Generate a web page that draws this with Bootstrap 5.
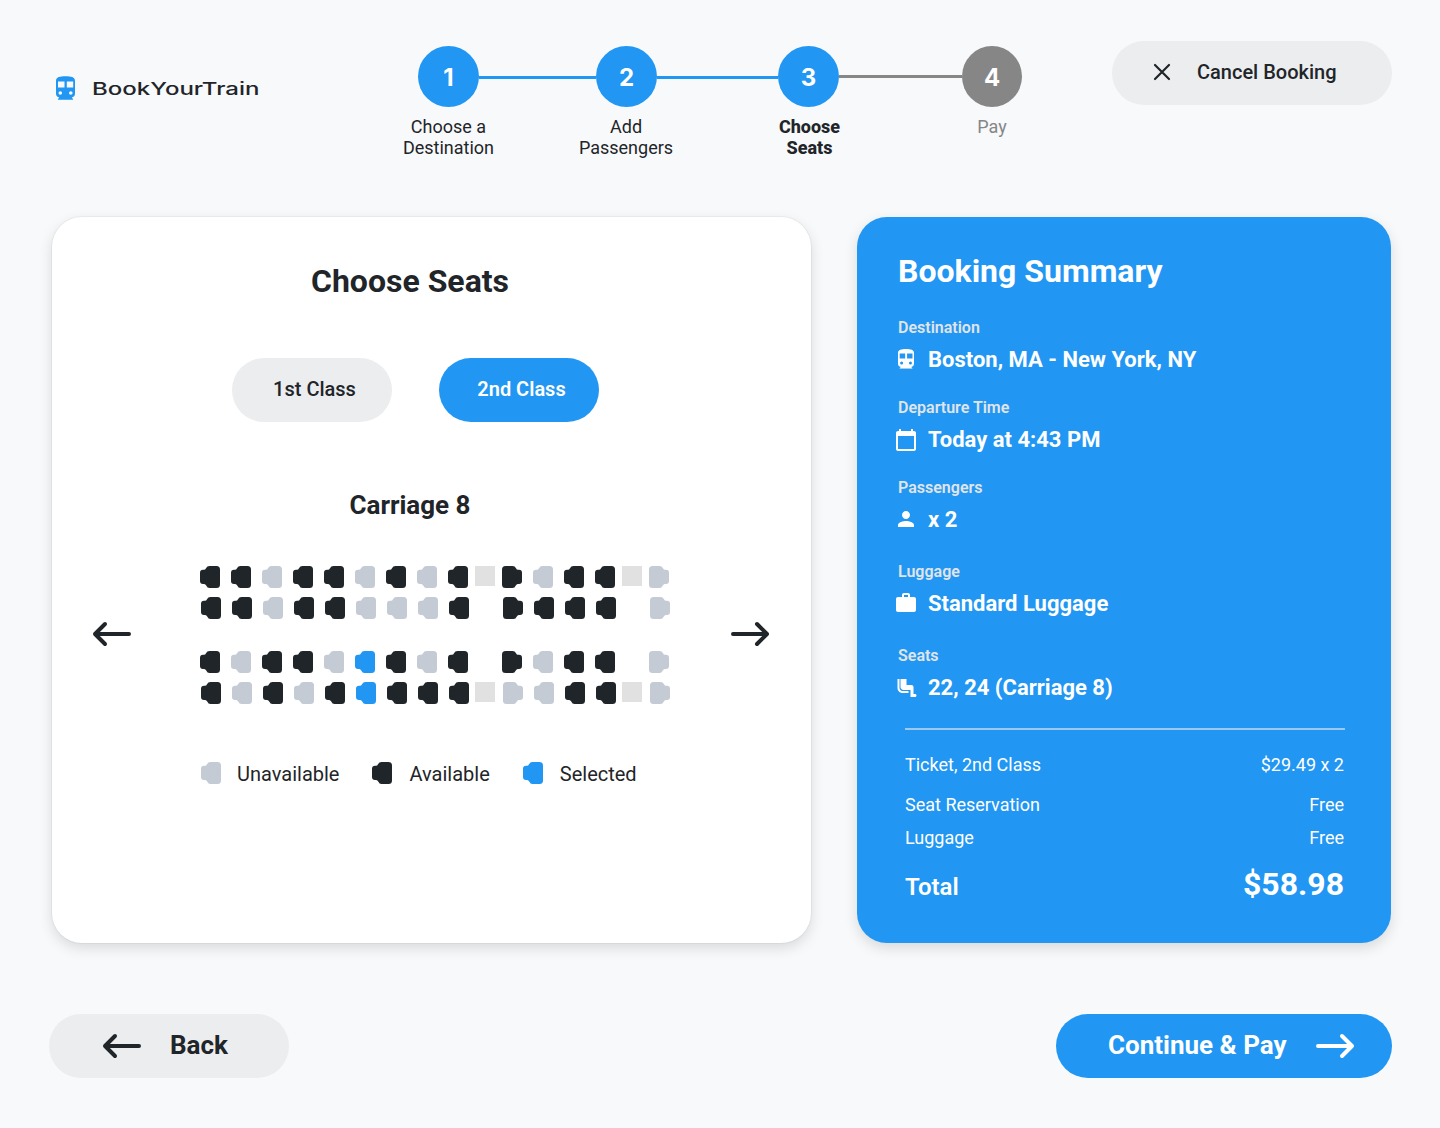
<!DOCTYPE html>
<html lang="en">
<head>
<meta charset="utf-8">
<meta name="viewport" content="width=device-width, initial-scale=1">
<title>BookYourTrain – Choose Seats</title>
<link href="https://cdn.jsdelivr.net/npm/bootstrap@5.3.0/dist/css/bootstrap.min.css" rel="stylesheet">
<style>
  :root { --blue: #2196f3; --ink: #1f2529; --soft: #ecedee; --seat-off: #c4cbd5; }
  body { background: #f7f9fb; color: var(--ink); font-family: Roboto, "Liberation Sans", sans-serif; }
  svg { display: block; flex: none; }
  .page { width: 1440px; height: 1128px; padding: 41px 48px 50px 49px; }
  .topbar { height: 176px; }
  .brand { margin: 35px 0 0 7px; width: 362px; }
  .brand-name { font: 500 17px Inter, sans-serif; }
  .steps { margin-top: 5px; }
  .step { width: 61px; }
  .bubble { width: 61px; height: 61px; background: var(--blue); color: #fff; font: 700 24px/63px Inter, sans-serif; text-align: center; }
  .step-label { font-size: 18px; line-height: 21px; margin-top: 9px; text-align: center; white-space: nowrap; }
  .step-label.second { padding-right: 1px; }
  .step-label.current { font-weight: 800; padding-left: 2px; }
  .rail { height: 3px; margin-top: 30px; background: var(--blue); }
  .rail-a { width: 117px; } .rail-b { width: 121px; } .rail-c { width: 123px; background: #868686; margin-top: 29px; }
  .todo, .todo .bubble { width: 60px; }
  .todo .bubble { background: #868686; } .todo .step-label { color: #868686; }
  .pill { border: 0; border-radius: 32px; height: 64px; background: var(--soft); color: var(--ink); padding: 0; white-space: nowrap; }
  .pill-blue { background: var(--blue); color: #fff; }
  .cancel { width: 280px; font-size: 20px; font-weight: 500; gap: 26px; padding: 0 0 2px 41px; }
  .panel { border-radius: 30px; height: 726px; box-shadow: 0 5px 14px rgba(0,0,0,.13); }
  .panel-seats { width: 759px; margin-left: 3px; background: #fff; padding: 43px 41px 0 40px; box-shadow: 0 5px 14px rgba(0,0,0,.13), 0 0 0 1px rgba(0,0,0,.04); }
  .panel-sum { width: 534px; margin-right: 1px; background: var(--blue); color: #fff; padding: 33px 47px 0 38px; }
  .h-main { font-size: 32px; line-height: 42px; font-weight: 700; }
  .h-sum { padding-left: 3px; }
  .off-centre { padding-right: 42px; text-align: center; }
  .classes { gap: 47px; margin: 56px 0 0 140px; }
  .classes .pill { width: 160px; font-size: 20px; font-weight: 500; line-height: 62px; padding: 0 0 2px 5px; }
  .classes .pill-blue { font-weight: 600; }
  .carriage { font-size: 26px; font-weight: 700; line-height: 34px; margin-top: 66px; }
  .deck { margin-top: 44px; height: 138px; }
  .seat-map { margin-left: 7px; }
  .seat-row { height: 22px; }
  .gap-row { margin-top: 9px; }
  .aisle { margin-top: 32px; }
  .seat { width: 20px; height: 22px; fill: var(--ink); margin-right: 11px; }
  .seat.u { fill: var(--seat-off); } .seat.s { fill: var(--blue); }
  .seat.flip { transform: scaleX(-1); }
  .seat.tight { margin-right: 7px; }
  .table-block { width: 20px; height: 20px; margin-right: 7px; }
  .table-block.on { background: #e1e1e2; }
  .shift .seat { transform: translateX(1px); }
  .shift .seat.flip { transform: translateX(1px) scaleX(-1); }
  .legend { margin: 57px 0 0 109px; font-size: 20px; line-height: 26px; }
  .legend .seat { margin: 0 0 2px; }
  .lg-a { margin: 0 33px 0 16px; } .lg-b { margin: 0 33px 0 17px; } .lg-c { margin-left: 17px; }
  .entries { padding-top: 26px; }
  .entry { height: 80px; }
  .entry-tall { height: 84px; }
  .sum-label { font-size: 16px; font-weight: 600; line-height: 20px; color: #e0e5ea; padding-left: 3px; }
  .sum-value { font-size: 22px; font-weight: 700; line-height: 28px; margin-top: 8px; gap: 10px; }
  .entry svg { width: 24px; height: 24px; fill: #fff; margin-left: -1px; }
  .rule { height: 2px; background: #9bc9ee; margin: -2px -1px 0 10px; }
  .costs { padding-left: 10px; font-size: 18px; line-height: 22px; }
  .cost-a { margin-top: 24px; } .cost-b { margin-top: 18px; } .cost-c { margin-top: 11px; }
  .total { margin-top: 14px; line-height: 42px; font-weight: 700; }
  .total-name { font-size: 24px; font-weight: 600; } .total-sum { font-size: 32px; }
  .back { width: 240px; font-size: 26px; font-weight: 700; gap: 28px; padding: 0 0 0 53px; }
  .next { width: 336px; font-size: 26px; font-weight: 700; gap: 28px; padding: 0 0 0 52px; }
  .back span, .next span { padding-bottom: 2px; }
  .arrow { width: 40px; height: 26px; fill: none; stroke: currentColor; stroke-width: 4; stroke-linecap: round; stroke-linejoin: round; }
  .deck .arrow { margin-bottom: 2px; }
</style>
<script src="https://cdn.jsdelivr.net/npm/bootstrap@5.3.0/dist/js/bootstrap.bundle.min.js"></script>
</head>
<body>
<svg width="0" height="0" class="position-absolute" aria-hidden="true">
  <symbol id="seat" viewBox="0 0 20 22"><path d="M9.500 0H16.500Q20 0 20 3.500V18.500Q20 22 16.500 22H9.500Q7.300 22 6.200 19.500Q5.500 17.900 4.200 17.900H3Q0 17.900 0 15V6.800Q0 3.800 3 3.800H4Q5.300 3.700 6 2.200Q7 0 9.500 0Z"/></symbol>
  <symbol id="train" viewBox="0 0 19 23.400"><path fill-rule="evenodd" d="M9.500 0C4 0 0 .8 0 4.500V17.500C0 19.500 1.400 21 3.300 21.300L2 22.600V23.400H17V22.600L15.700 21.300C17.600 21 19 19.500 19 17.500V4.500C19 .8 15 0 9.500 0ZM2 5.300H8.500V11.300H2ZM10.800 5.300H17.200V11.300H10.800ZM4.300 14.900a1.800 1.800 0 1 1 0 3.600a1.800 1.800 0 1 1 0-3.600ZM14.800 14.900a1.800 1.800 0 1 1 0 3.600a1.800 1.800 0 1 1 0-3.600Z"/></symbol>
  <symbol id="left" viewBox="0 0 40 26"><path d="M37 13H3M13 3L3 13L13 23"/></symbol>
  <symbol id="right" viewBox="0 0 40 26"><path d="M3 13H37M27 3L37 13L27 23"/></symbol>
</svg>

<div class="page d-flex flex-column">
  <header class="topbar d-flex align-items-start">
    <div class="brand d-flex">
      <svg width="19" height="24" fill="#2196f3"><use href="#train"/></svg>
      <svg width="188" height="28"><text class="brand-name" x="17" y="18.500" textLength="167.500" lengthAdjust="spacingAndGlyphs" fill="#1f2529">BookYourTrain</text></svg>
    </div>
    <div class="steps d-flex align-items-start">
      <div class="step d-flex flex-column align-items-center"><div class="bubble rounded-circle">1</div><div class="step-label">Choose a<br>Destination</div></div>
      <div class="rail rail-a"></div>
      <div class="step d-flex flex-column align-items-center"><div class="bubble rounded-circle">2</div><div class="step-label second">Add<br>Passengers</div></div>
      <div class="rail rail-b"></div>
      <div class="step d-flex flex-column align-items-center"><div class="bubble rounded-circle">3</div><div class="step-label current">Choose<br>Seats</div></div>
      <div class="rail rail-c"></div>
      <div class="step todo d-flex flex-column align-items-center"><div class="bubble rounded-circle">4</div><div class="step-label">Pay</div></div>
    </div>
    <button class="btn pill cancel d-flex align-items-center ms-auto">
      <svg width="18" height="18" viewBox="0 0 18 18" fill="none" stroke="currentColor" stroke-width="2.200" stroke-linecap="round"><path d="M2 2L16 16M16 2L2 16"/></svg>
      Cancel Booking
    </button>
  </header>

  <main class="d-flex justify-content-between">
    <section class="panel panel-seats">
      <h1 class="h-main off-centre mb-0">Choose Seats</h1>
      <div class="classes d-flex">
        <button class="btn pill">1st Class</button>
        <button class="btn pill pill-blue">2nd Class</button>
      </div>
      <h2 class="carriage off-centre mb-0">Carriage 8</h2>
      <div class="deck d-flex align-items-center justify-content-between">
        <svg class="arrow"><use href="#left"/></svg>
        <div id="seats" class="seat-map"></div>
        <svg class="arrow"><use href="#right"/></svg>
      </div>
      <div class="legend d-flex align-items-center">
        <svg class="seat u"><use href="#seat"/></svg><span class="lg-a">Unavailable</span>
        <svg class="seat"><use href="#seat"/></svg><span class="lg-b">Available</span>
        <svg class="seat s"><use href="#seat"/></svg><span class="lg-c">Selected</span>
      </div>
    </section>

    <section class="panel panel-sum">
      <h2 class="h-main h-sum mb-0">Booking Summary</h2>
      <div class="entries">
        <div class="entry"><div class="sum-label">Destination</div><div class="sum-value d-flex align-items-center"><svg viewBox="0 0 24 24"><use href="#train" x="4" y="1" width="16" height="19.700"/></svg>Boston, MA - New York, NY</div></div>
        <div class="entry"><div class="sum-label">Departure Time</div><div class="sum-value d-flex align-items-center"><svg viewBox="0 0 24 24"><path fill-rule="evenodd" d="M20 3h-1V1h-2v2H7V1H5v2H4c-1.100 0-2 .9-2 2v16c0 1.100.9 2 2 2h16c1.100 0 2-.9 2-2V5c0-1.100-.9-2-2-2zm0 18H4V8h16v13z"/></svg>Today at 4:43 PM</div></div>
        <div class="entry entry-tall"><div class="sum-label">Passengers</div><div class="sum-value d-flex align-items-center"><svg viewBox="0 1 24 24"><path d="M12 12c2.210 0 4-1.790 4-4s-1.790-4-4-4-4 1.790-4 4 1.790 4 4 4zm0 2c-2.670 0-8 1.340-8 4v2h16v-2c0-2.660-5.330-4-8-4z"/></svg>x 2</div></div>
        <div class="entry entry-tall"><div class="sum-label">Luggage</div><div class="sum-value d-flex align-items-center"><svg viewBox="0 1 24 24"><path fill-rule="evenodd" d="M20 6h-4V4c0-1.110-.89-2-2-2h-4c-1.110 0-2 .89-2 2v2H4c-1.110 0-2 .89-2 2v11c0 1.110.89 2 2 2h16c1.110 0 2-.89 2-2V8c0-1.110-.89-2-2-2zm-6 0h-4V4h4v2z"/></svg>Standard Luggage</div></div>
        <div class="entry entry-tall"><div class="sum-label">Seats</div><div class="sum-value d-flex align-items-center"><svg viewBox="-.5 0 24 24"><path d="M5 12V3H3v9c0 2.760 2.240 5 5 5h6v-2H8c-1.660 0-3-1.340-3-3zm15.500 6H19v-7c0-1.100-.9-2-2-2h-5V3H6v8c0 1.650 1.350 3 3 3h7v7h4.500c.83 0 1.500-.67 1.500-1.500s-.67-1.500-1.500-1.500z"/></svg>22, 24 (Carriage 8)</div></div>
      </div>
      <div class="rule"></div>
      <div class="costs">
        <div class="cost-a d-flex justify-content-between"><span>Ticket, 2nd Class</span><span>$29.49 x 2</span></div>
        <div class="cost-b d-flex justify-content-between"><span>Seat Reservation</span><span>Free</span></div>
        <div class="cost-c d-flex justify-content-between"><span>Luggage</span><span>Free</span></div>
        <div class="total d-flex justify-content-between align-items-baseline"><span class="total-name">Total</span><span class="total-sum">$58.98</span></div>
      </div>
    </section>
  </main>

  <footer class="d-flex justify-content-between mt-auto">
    <button class="btn pill back d-flex align-items-center"><svg class="arrow"><use href="#left"/></svg><span>Back</span></button>
    <button class="btn pill pill-blue next d-flex align-items-center"><span>Continue &amp; Pay</span><svg class="arrow"><use href="#right"/></svg></button>
  </footer>
</div>
<script>
  // a = available, u = unavailable, s = selected; upper case faces the other way; # = table, _ = empty
  const rows = ['aauaauaua#Auaa#U', 'aauaauuua_Aaaa_U', 'auaausaua_Auaa_U', 'auauasaaa#Uuaa#U'];
  document.getElementById('seats').innerHTML = rows.map((row, r) => {
    const cells = [...row].map((c, i) => {
      if (c === '#' || c === '_') return `<div class="table-block ${c === '#' ? 'on' : ''}"></div>`;
      const tight = i === 8 || i === 13 ? ' tight' : i === 15 ? ' me-0' : '';
      const flip = c !== c.toLowerCase() ? ' flip' : '';
      return `<svg class="seat ${c.toLowerCase()}${flip}${tight}"><use href="#seat"/></svg>`;
    }).join('');
    return `<div class="seat-row d-flex ${r % 2 ? 'shift gap-row' : r ? 'aisle' : ''}">${cells}</div>`;
  }).join('');
</script>
</body>
</html>
